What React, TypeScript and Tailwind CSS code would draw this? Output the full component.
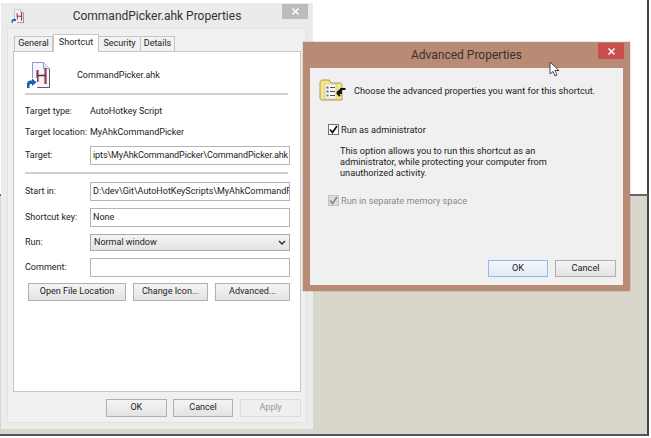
// Two overlapping Windows 8 dialogs on a desktop, each window placed at its canvas position.
import type { ReactNode } from "react";

const font = "font-['Roboto','Noto_Sans',sans-serif]";

function WinButton({ children, className = "" }: { children: ReactNode; className?: string }) {
  return (
    <div
      className={`flex items-center justify-center border border-[#b0b0b0] bg-gradient-to-b from-[#f4f4f4] to-[#e3e3e3] text-[#222] ${className}`}
    >
      {children}
    </div>
  );
}

function Field({ children, className = "" }: { children?: ReactNode; className?: string }) {
  return (
    <div
      className={`flex w-[200px] items-center overflow-hidden whitespace-nowrap border border-[#b5b5b5] bg-white pl-[2px] text-[#222] ${className}`}
    >
      {children}
    </div>
  );
}

function Row({ label, children, className = "" }: { label: string; children: ReactNode; className?: string }) {
  return (
    <div className={`flex items-center ${className}`}>
      <span className="w-[65px] shrink-0 whitespace-nowrap text-[#222]">{label}</span>
      {children}
    </div>
  );
}

function ScriptIcon({ small = false }: { small?: boolean }) {
  const s = small ? 13 : 24;
  return (
    <svg width={s} height={small ? 14 : 26} viewBox="0 0 24 26">
      <path d="M6.500 .5h11l6 6v19h-17z" fill="#f3f5fb" stroke="#8f9cc9" />
      <path d="M17.500 .5v6h6" fill="#dfe6f6" stroke="#8f9cc9" />
      <path d="M23.500 7v18.500h-12" fill="none" stroke="#7a4a6a" />
      <path d="M11.500 8v12M19.500 6v16" stroke="#a8324f" strokeWidth="2.200" />
      <path d="M11.500 13.500h8" stroke="#3c3c55" strokeWidth="1.600" />
      <rect x="0" y="16" width="11" height="10" fill="#fff" />
      <path d="M1 26v-4c0-2.500 1.500-3.500 3.500-3.500H6v-2l4.500 3.800L6 24v-2H5c-1 0-1.500.5-1.500 1.500V26z" fill="#1f5fb4" />
    </svg>
  );
}

function FolderIcon() {
  return (
    <svg width="27" height="23" viewBox="0 0 27 23">
      <path d="M1 4c0-2 1-3 3-3h6l2 3h9c1 0 2 1 2 2v15H3c-1 0-2-1-2-2z" fill="#f5e488" stroke="#a79a4a" />
      <rect x="6" y="5" width="11" height="15" fill="#f8f8f0" stroke="#b9b9a0" strokeWidth="0.6" />
      <path d="M7.500 7.500h2v2h-2z" fill="#d23b3b" />
      <path d="M7.500 11.500h2v2h-2z" fill="#3b6fd2" />
      <path d="M7.500 15.500h2v2h-2z" fill="#3ba34a" />
      <path d="M11 8.500h5M11 12.500h5M11 16.500h5" stroke="#555" />
      <path d="M18 14h4v-4h4.500M18 14l3-3M18 14l3 3" fill="none" stroke="#111" strokeWidth="1.800" />
    </svg>
  );
}

function CheckBox({ disabled = false }: { disabled?: boolean }) {
  return (
    <div
      className={`flex h-[11px] w-[11px] shrink-0 items-center justify-center border ${
        disabled ? "border-[#c4c4c4] bg-[#dcdcdc]" : "border-[#707070] bg-white"
      }`}
    >
      <svg width="9" height="9" viewBox="0 0 9 9">
        <path d="M1 4.500l2.500 3L8 1" fill="none" stroke={disabled ? "#8a8a8a" : "#111"} strokeWidth="1.700" />
      </svg>
    </div>
  );
}

function CloseX() {
  return (
    <svg width="9" height="9" viewBox="0 0 9 9">
      <path d="M1.500 1.500l6 6M7.500 1.500l-6 6" stroke="#fff" strokeWidth="1.500" />
    </svg>
  );
}

function PropertiesWindow() {
  return (
    <div className="absolute left-[1px] top-[3px] flex h-[426px] w-[312px] flex-col bg-[#ebebeb] px-[6px] pb-[6px] text-[9px]">
      <div className="relative flex h-[25px] shrink-0 items-center justify-center text-[12px] text-[#333]">
        <div className="absolute left-[4px] top-[6px]">
          <ScriptIcon small />
        </div>
        <span>CommandPicker.ahk Properties</span>
        <div className="absolute right-[-1px] top-[1px] flex h-[15px] w-[26px] items-center justify-center bg-[#bcbcbc]">
          <CloseX />
        </div>
      </div>
      <div className="flex flex-1 flex-col border border-[#e2e2e2] bg-[#f0f0f0] px-[5px]">
        <div className="flex h-[22px] items-end pl-[1px] text-[#222]">
          <div className="flex h-[15px] w-[39px] items-center justify-center border border-b-0 border-[#c6c6c6] bg-[#f2f2f2]">General</div>
          <div className="z-10 -mb-px flex h-[18px] w-[46px] items-start justify-center border border-b-0 border-[#c6c6c6] bg-white pt-[1px]">Shortcut</div>
          <div className="flex h-[15px] w-[42px] items-center justify-center border border-b-0 border-l-0 border-[#c6c6c6] bg-[#f2f2f2]">Security</div>
          <div className="flex h-[15px] w-[34px] items-center justify-center border border-b-0 border-l-0 border-[#c6c6c6] bg-[#f2f2f2]">Details</div>
        </div>
        <div className="flex h-[341px] w-[288px] flex-col border border-[#c6c6c6] bg-white pl-[11px]">
          <div className="flex h-[41px] items-center">
            <div className="ml-[1px] mt-[4px]">
              <ScriptIcon />
            </div>
            <span className="ml-[27px] mt-[6px] text-[#222]">CommandPicker.ahk</span>
          </div>
          <div className="h-[2px] w-[263px] bg-[#cfcfcf]" />
          <Row label="Target type:" className="mt-[9px] h-[16px]">
            <span className="text-[#222]">AutoHotkey Script</span>
          </Row>
          <Row label="Target location:" className="mt-[5px] h-[16px]">
            <span className="text-[#222]">MyAhkCommandPicker</span>
          </Row>
          <Row label="Target:" className="mt-[5px]">
            <Field className="h-[19px] tracking-[-0.1px]">ipts\MyAhkCommandPicker\CommandPicker.ahk</Field>
          </Row>
          <div className="mt-[7px] h-[2px] w-[263px] bg-[#cfcfcf]" />
          <Row label="Start in:" className="mt-[8px]">
            <Field className="h-[19px]">D:\dev\Git\AutoHotKeyScripts\MyAhkCommandF</Field>
          </Row>
          <Row label="Shortcut key:" className="mt-[7px]">
            <Field className="h-[19px]">None</Field>
          </Row>
          <Row label="Run:" className="mt-[7px]">
            <div className="flex h-[17px] w-[200px] items-center justify-between border border-[#a9a9a9] bg-gradient-to-b from-[#f4f4f4] to-[#e3e3e3] px-[3px] text-[#222]">
              <span>Normal window</span>
              <svg width="8" height="6" viewBox="0 0 8 6">
                <path d="M1 1l3 3 3-3" fill="none" stroke="#333" strokeWidth="1.500" />
              </svg>
            </div>
          </Row>
          <Row label="Comment:" className="mt-[7px]">
            <Field className="h-[19px]" />
          </Row>
          <div className="ml-[3px] mt-[6px] flex gap-[7px]">
            <WinButton className="h-[18px] w-[98px]">Open File Location</WinButton>
            <WinButton className="h-[18px] w-[75px]">Change Icon...</WinButton>
            <WinButton className="h-[18px] w-[75px]">Advanced...</WinButton>
          </div>
        </div>
        <div className="ml-[93px] mt-[7px] flex gap-[6px]">
          <WinButton className="h-[18px] w-[61px]">OK</WinButton>
          <WinButton className="h-[18px] w-[61px]">Cancel</WinButton>
          <WinButton className="ml-[1px] h-[18px] w-[61px] !border-[#dcdcdc] !from-[#efefef] !to-[#efefef] !text-[#9a9a9a]">Apply</WinButton>
        </div>
      </div>
    </div>
  );
}

function AdvancedWindow() {
  return (
    <div className="absolute left-[303px] top-[42px] flex h-[249px] w-[327px] flex-col bg-[#b98a74] px-[7px] pb-[6px] shadow-[0_0_1px_#8a6a5a]">
      <div className="relative flex h-[26px] shrink-0 items-center justify-center text-[12px] text-[#3a3230]">
        <span>Advanced Properties</span>
        <div className="absolute right-[-1px] top-[1px] flex h-[16px] w-[26px] items-center justify-center bg-[#c9504f]">
          <CloseX />
        </div>
      </div>
      <div className="flex flex-1 flex-col bg-[#f0f0f0] pl-[9px] text-[9.2px] text-[#222]">
        <div className="mt-[11px] flex items-center">
          <FolderIcon />
          <span className="ml-[8px] whitespace-nowrap">Choose the advanced properties you want for this shortcut.</span>
        </div>
        <div className="ml-[9px] mt-[21px] flex items-center gap-[2px]">
          <CheckBox />
          <span>Run as administrator</span>
        </div>
        <p className="ml-[21px] mt-[8px] w-[212px] leading-[11px]">
          This option allows you to run this shortcut as an administrator, while protecting your computer from
          unauthorized activity.
        </p>
        <div className="ml-[9px] mt-[16px] flex items-center gap-[2px] text-[#8a8a8a]">
          <CheckBox disabled />
          <span>Run in separate memory space</span>
        </div>
        <div className="ml-[169px] mt-[52px] flex gap-[7px]">
          <WinButton className="h-[17px] w-[60px] !border-[#8cbcec] !from-[#f2f6fa] !to-[#e5ecf2]">OK</WinButton>
          <WinButton className="h-[17px] w-[61px]">Cancel</WinButton>
        </div>
      </div>
    </div>
  );
}

function Cursor() {
  return (
    <svg className="absolute left-[549px] top-[61px]" width="12" height="17" viewBox="0 0 12 17">
      <path d="M1 1v12l3-2.500 2 4.500 2-1-2-4.500h4z" fill="#fff" stroke="#333" strokeWidth="0.900" />
    </svg>
  );
}

export default function App() {
  return (
    <div className={`relative h-[438px] w-[651px] overflow-hidden bg-white ${font}`}>
      {/* desktop behind the dialogs */}
      <div className="absolute left-0 top-[194px] h-[242px] w-[649px] border-b-2 border-r-2 border-t-2 border-b-[#555] border-r-[#444] border-t-[#666] bg-[#d9d7cb]" />
      <div className="absolute right-[2px] top-0 h-[194px] w-[2px] bg-[#444]" />
      <PropertiesWindow />
      <AdvancedWindow />
      <Cursor />
    </div>
  );
}
